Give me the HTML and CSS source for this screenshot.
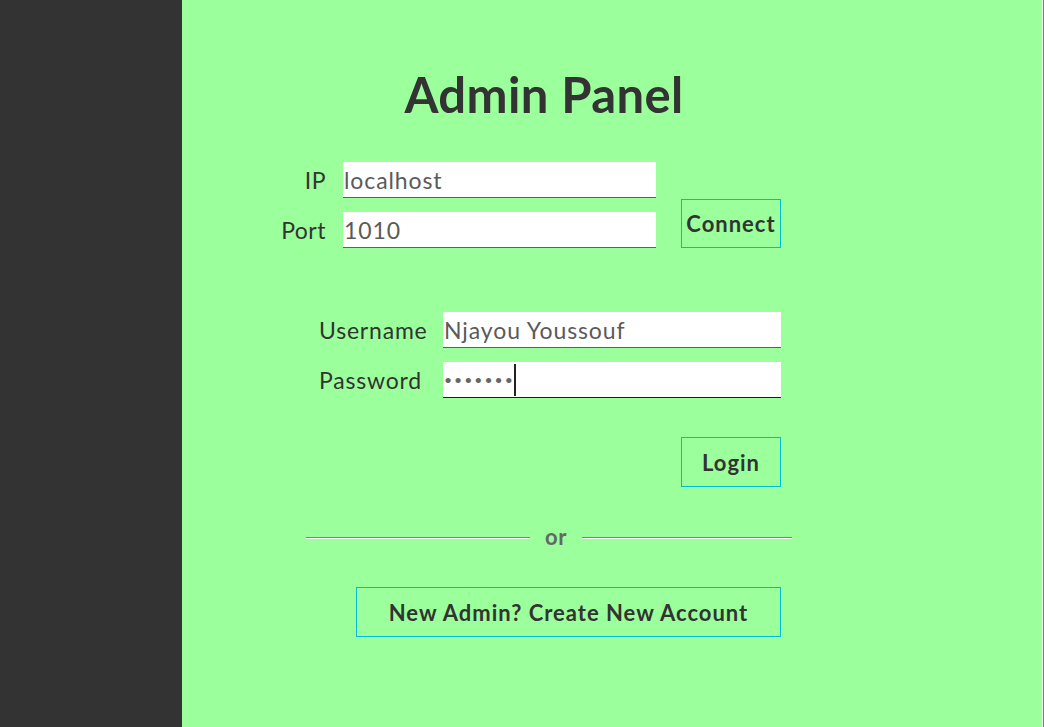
FILE: index.html
```html
<!DOCTYPE html>
<html lang="en">
<head>
<meta charset="utf-8">
<title>Admin Panel</title>
<link rel="stylesheet" href="styles.css">
</head>
<body>
<div class="app">
  <aside class="sidebar"></aside>
  <main class="main">
    <div class="panel">
      <h1 class="title">Admin Panel</h1>

      <div class="conn">
        <label class="conn-label row-1">IP</label>
        <div class="field row-1"><span class="value">localhost</span></div>
        <label class="conn-label row-2">Port</label>
        <div class="field row-2"><span class="value">1010</span></div>
        <button class="btn btn-connect">Connect</button>
      </div>

      <div class="login">
        <label class="login-label">Username</label>
        <div class="field"><span class="value">Njayou Youssouf</span></div>
        <label class="login-label">Password</label>
        <div class="field focused"><span class="dots">•••••••</span><span class="caret"></span></div>
      </div>

      <div class="login-actions">
        <button class="btn btn-login">Login</button>
      </div>

      <div class="divider">
        <span class="line line-left"></span>
        <span class="or">or</span>
        <span class="line line-right"></span>
      </div>

      <button class="btn btn-create">New Admin? Create New Account</button>
    </div>
  </main>
  <div class="edge"></div>
</div>
</body>
</html>
```

FILE: styles.css
```css
* { box-sizing: border-box; }
html, body { margin: 0; padding: 0; height: 100%; }
body { font-family: Lato, "Noto Sans", sans-serif; color: #333; }

.app { display: flex; height: 727px; }
.sidebar { width: 182px; background: #333333; flex: none; }
.main { flex: 1; background: #9bff9b; }
.edge { width: 2px; background: #7a7a7a; border-left: 1px solid #f4f4f4; flex: none; }

.panel { width: 510px; margin-left: 100px; padding-top: 66px; }

.title {
  margin: 0;
  font-size: 49px;
  line-height: 56px;
  font-weight: 700;
  letter-spacing: 0.4px;
  text-align: center;
  padding-left: 14px;
  color: #333;
}

.field {
  height: 36px;
  background: #fff;
  border-bottom: 1px solid #5f5f5f;
  display: flex;
  align-items: center;
  padding-left: 1px;
  font-size: 23px;
  letter-spacing: 0.9px;
  color: #5a5a5a;
}
.field.focused { border-bottom-color: #1e1e1e; }
.dots { letter-spacing: 2px; font-size: 14px; color: #666; }
.caret { width: 2px; height: 32px; background: #222; margin-left: -1px; }

.conn {
  margin-top: 40px;
  display: grid;
  grid-template-columns: 44px 17px 313px 25px 100px;
  grid-template-rows: 36px 36px;
  row-gap: 14px;
  width: 499px;
}
.conn-label { grid-column: 1; font-size: 23px; letter-spacing: 0.5px; text-align: right; align-self: center; justify-self: end; white-space: nowrap; }
.conn .field { grid-column: 3; }
.row-1 { grid-row: 1; }
.row-2 { grid-row: 2; }
.btn-connect { grid-column: 5; grid-row: 1 / 3; align-self: end; height: 49px; width: 100px; }

.btn {
  -webkit-appearance: none;
  appearance: none;
  background: transparent;
  border: 1px solid #00bcd6;
  border-radius: 0;
  font-family: inherit;
  font-weight: 700;
  font-size: 22px;
  letter-spacing: 1px;
  color: #333;
  padding: 0;
  cursor: pointer;
}

.login {
  margin-top: 64px;
  margin-left: 37px;
  display: grid;
  grid-template-columns: 124px 338px;
  grid-auto-rows: 36px;
  row-gap: 14px;
}
.login-label { font-size: 23px; letter-spacing: 0.8px; align-self: center; }

.login-actions { width: 499px; display: flex; justify-content: flex-end; margin-top: 39px; }
.btn-login { width: 100px; height: 50px; }

.divider {
  margin-top: 36px;
  margin-left: 24px;
  height: 30px;
  display: flex;
  align-items: center;
  gap: 15px;
}
.divider .line { height: 2px; border-top: 1px solid #6f7fa0; background: #fff; }
.divider .line-left { width: 224px; flex: none; }
.divider .line-right { flex: 1; }
.divider .or { font-size: 22px; font-weight: 700; letter-spacing: 0.5px; color: #666; padding-bottom: 3px; }

.btn-create { display: block; margin-top: 34px; margin-left: 74px; width: 425px; height: 50px; }
```
